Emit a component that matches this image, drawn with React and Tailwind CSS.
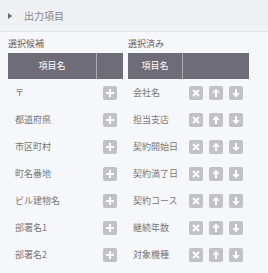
import React from "react";

const candidates = ["〒", "都道府県", "市区町村", "町名番地", "ビル建物名", "部署名1", "部署名2"];
const selected = ["会社名", "担当支店", "契約開始日", "契約満了日", "契約コース", "継続年数", "対象機種"];

function IconButton({ children }) {
  return (
    <span className="w-[14px] h-[14px] rounded-[2px] bg-[#c2c2c6] flex items-center justify-center">
      <svg width="10" height="10" viewBox="0 0 10 10" fill="none" stroke="#fff" strokeWidth="2" strokeLinecap="butt">
        {children}
      </svg>
    </span>
  );
}

function Plus() {
  return (
    <IconButton>
      <path d="M5 1v8M1 5h8" />
    </IconButton>
  );
}

function Cross() {
  return (
    <IconButton>
      <path d="M2 2l6 6M8 2l-6 6" />
    </IconButton>
  );
}

function Up() {
  return (
    <IconButton>
      <path d="M5 9V3" />
      <path d="M5 1L1.8 4.6h6.4z" fill="#fff" strokeWidth="0.6" />
    </IconButton>
  );
}

function Down() {
  return (
    <IconButton>
      <path d="M5 1v6" />
      <path d="M5 9L1.8 5.4h6.4z" fill="#fff" strokeWidth="0.6" />
    </IconButton>
  );
}

function App() {
  return (
    <div className="w-[268px] h-[273px] overflow-hidden bg-[#f6f7fa] font-['Noto_Sans_CJK_JP',sans-serif]">
      <div className="h-[32px] bg-[#eef0f4] border-b border-[#e2e4e8] flex items-center pl-[8px]">
        <span className="w-0 h-0 border-y-[3px] border-y-transparent border-l-[4px] border-l-[#666]" />
        <span className="ml-[12px] text-[10px] leading-none text-[#888]">出力項目</span>
      </div>

      <div className="flex pl-[8px] pt-[6px]">
        <div className="w-[115px]">
          <div className="h-[12px] mb-[3px] text-[9px] leading-[12px] text-[#666]">選択候補</div>
          <div className="flex h-[26px] gap-px bg-[#aeadb5]">
            <div className="w-[88px] bg-[#6d6c77] flex items-center justify-center text-[9px] text-white">項目名</div>
            <div className="flex-1 bg-[#6d6c77]" />
          </div>
          {candidates.map((name) => (
            <div key={name} className="flex h-[27px] items-center">
              <div className="w-[89px] pl-[7px] text-[9px] text-[#777]">{name}</div>
              <div className="flex-1 flex justify-center">
                <Plus />
              </div>
            </div>
          ))}
        </div>

        <div className="w-[121px] ml-[5px]">
          <div className="h-[12px] mb-[3px] text-[9px] leading-[12px] text-[#666]">選択済み</div>
          <div className="flex h-[26px] gap-px bg-[#aeadb5]">
            <div className="w-[54px] bg-[#6d6c77] flex items-center justify-center text-[9px] text-white">項目名</div>
            <div className="flex-1 bg-[#6d6c77]" />
          </div>
          {selected.map((name) => (
            <div key={name} className="flex h-[27px] items-center">
              <div className="w-[55px] pl-[5px] text-[9px] text-[#777] whitespace-nowrap">{name}</div>
              <div className="flex-1 flex justify-center gap-[6px]">
                <Cross />
                <Up />
                <Down />
              </div>
            </div>
          ))}
        </div>
      </div>
    </div>
  );
}

export default App;
